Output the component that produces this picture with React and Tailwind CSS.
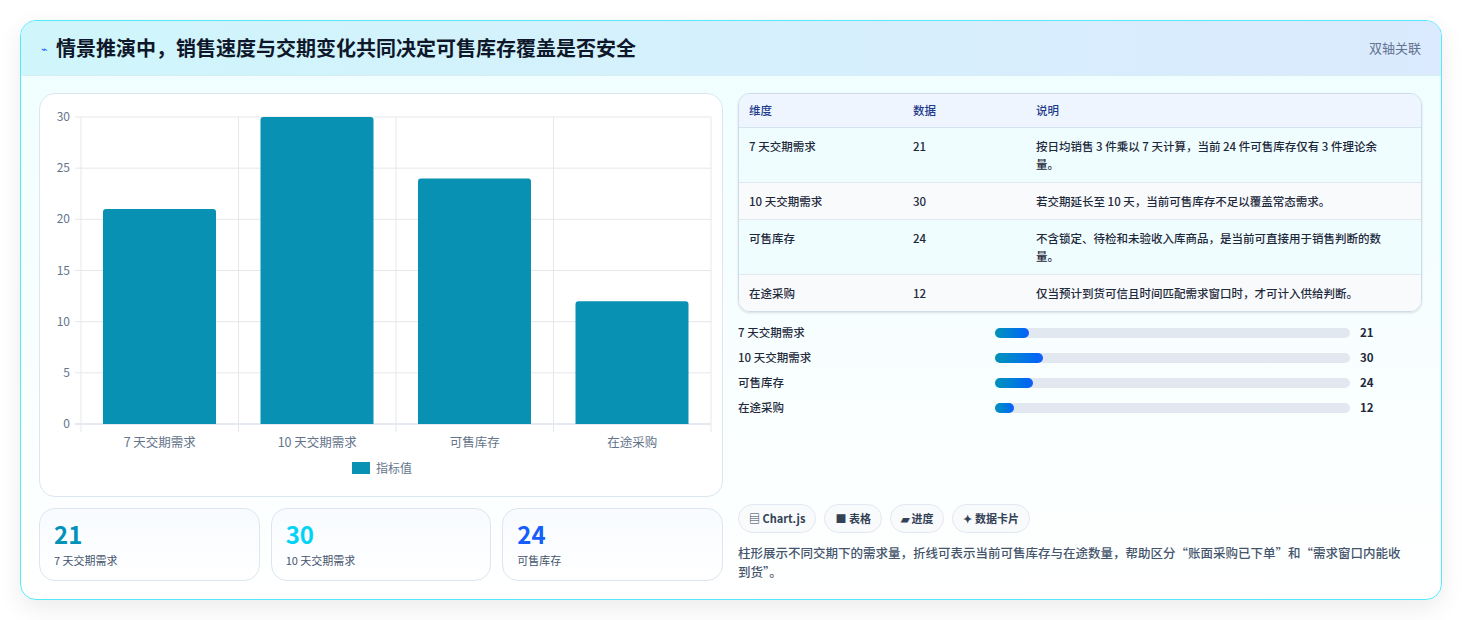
import React from "react";

const F = { fontFamily: '"Noto Sans CJK SC", "Noto Sans", sans-serif' };

function Chart() {
  const vals = [21, 30, 24, 12];
  const labels = ["7 天交期需求", "10 天交期需求", "可售库存", "在途采购"];
  const x0 = 41, x1 = 671, yTop = 23, yBot = 330;
  const sc = (yBot - yTop) / 30;
  const cw = (x1 - x0) / 4;
  return (
    <svg width="684" height="404" style={F}>
      {[0, 5, 10, 15, 20, 25, 30].map((t) => {
        const y = yBot - t * sc;
        return (
          <g key={t}>
            <line x1={x0 - 6} x2={x1} y1={y} y2={y} stroke={t === 0 ? "#cbd5e1" : "#e5e7eb"} />
            <text x={30} y={y + 4} textAnchor="end" fontSize="12" fill="#64748b">{t}</text>
          </g>
        );
      })}
      {[0, 1, 2, 3, 4].map((i) => (
        <line key={i} x1={x0 + i * cw} x2={x0 + i * cw} y1={yTop} y2={yBot + 8} stroke="#e5e7eb" />
      ))}
      {vals.map((v, i) => {
        const bx = x0 + i * cw + 22;
        const h = v * sc;
        return (
          <g key={i}>
            <path d={`M${bx} ${yBot} V${yBot - h + 3} Q${bx} ${yBot - h} ${bx + 3} ${yBot - h} H${bx + 110} Q${bx + 113} ${yBot - h} ${bx + 113} ${yBot - h + 3} V${yBot}Z`} fill="#0891b2" />
            <text x={x0 + i * cw + cw / 2} y={yBot + 23} textAnchor="middle" fontSize="12.5" fill="#64748b">{labels[i]}</text>
          </g>
        );
      })}
      <rect x="312" y="368" width="18" height="12" fill="#0891b2" />
      <text x="336" y="379" fontSize="12" fill="#64748b">指标值</text>
    </svg>
  );
}

const rows = [
  ["7 天交期需求", "21", "按日均销售 3 件乘以 7 天计算，当前 24 件可售库存仅有 3 件理论余量。"],
  ["10 天交期需求", "30", "若交期延长至 10 天，当前可售库存不足以覆盖常态需求。"],
  ["可售库存", "24", "不含锁定、待检和未验收入库商品，是当前可直接用于销售判断的数量。"],
  ["在途采购", "12", "仅当预计到货可信且时间匹配需求窗口时，才可计入供给判断。"],
];
const bars = [["7 天交期需求", 21, 34], ["10 天交期需求", 30, 48], ["可售库存", 24, 38], ["在途采购", 12, 19]];

export default function App() {
  return (
    <div className="bg-white p-5 pr-5" style={F}>
      <div className="w-[1422px] rounded-2xl border border-cyan-300 overflow-hidden shadow-[0_8px_24px_rgba(0,0,0,0.08)] bg-gradient-to-b from-[#effeff] to-white">
        <div className="h-[55px] flex items-center justify-between px-5 bg-gradient-to-r from-[#cff6fb] to-[#dbeafe] border-b border-[#d6eef5]">
          <div className="flex items-center gap-2">
            <span className="text-[11px] text-blue-600">⌁</span>
            <span className="text-[20px] font-bold text-[#0f172a]">情景推演中，销售速度与交期变化共同决定可售库存覆盖是否安全</span>
          </div>
          <span className="text-[13px] text-slate-500">双轴关联</span>
        </div>
        <div className="flex gap-[15px] px-[18px] pt-[17px] pb-[18px]">
          <div className="w-[684px] flex flex-col gap-[11px]">
            <div className="h-[404px] rounded-2xl border border-[#dbe6f0] bg-white"><Chart /></div>
            <div className="grid grid-cols-3 gap-[11px]">
              {[["21", "text-cyan-600", "7 天交期需求"], ["30", "text-cyan-400", "10 天交期需求"], ["24", "text-blue-600", "可售库存"]].map(([n, c, l]) => (
                <div key={l} className="h-[73px] rounded-2xl border border-[#dbe6f0] bg-gradient-to-b from-[#f8fbff] to-white px-[14px] pt-[10px]">
                  <div className={`text-[24px] font-bold leading-[30px] ${c}`}>{n}</div>
                  <div className="text-[11px] text-slate-600 mt-[3px]">{l}</div>
                </div>
              ))}
            </div>
          </div>
          <div className="w-[684px] flex flex-col">
            <div className="rounded-xl border border-[#cfdbe8] overflow-hidden text-[11.5px] text-[#1e293b] shadow-sm">
              <div className="grid grid-cols-[164px_123px_1fr] h-[34px] items-center px-[10px] bg-[#eef5ff] text-[#1e3a8a] font-medium border-b border-[#d5e2ef]">
                <span>维度</span><span>数据</span><span>说明</span>
              </div>
              {rows.map((r, i) => (
                <div key={i} className={`grid grid-cols-[164px_123px_1fr] px-[10px] py-[9px] leading-[18px] font-medium ${i % 2 ? "bg-[#f8fafc]" : "bg-[#f0fdff]"} ${i < 3 ? "border-b border-[#e2e8f0]" : ""}`}>
                  <span>{r[0]}</span><span>{r[1]}</span><span className="pr-6">{r[2]}</span>
                </div>
              ))}
            </div>
            <div className="mt-[12px] flex flex-col gap-[7px]">
              {bars.map(([l, v, w]) => (
                <div key={l} className="flex items-center h-[18px] text-[11.5px] font-medium text-[#1e293b]">
                  <span className="w-[257px]">{l}</span>
                  <div className="w-[355px] h-[10px] rounded-full bg-[#e2e8f0]">
                    <div className="h-full rounded-full bg-gradient-to-r from-cyan-600 to-blue-600" style={{ width: w }} />
                  </div>
                  <span className="ml-[10px] font-bold">{v}</span>
                </div>
              ))}
            </div>
            <div className="mt-auto flex gap-2">
              {["▤ Chart.js", "■ 表格", "▰ 进度", "✦ 数据卡片"].map((t) => (
                <span key={t} className="h-[29px] px-[10px] flex items-center rounded-full border border-[#e2e8f0] bg-[#f8fafc] text-[11px] font-semibold text-[#334155]">{t}</span>
              ))}
            </div>
            <p className="mt-[10px] text-[12.5px] leading-[19px] font-medium text-slate-600 pr-4">柱形展示不同交期下的需求量，折线可表示当前可售库存与在途数量，帮助区分“账面采购已下单”和“需求窗口内能收到货”。</p>
          </div>
        </div>
      </div>
    </div>
  );
}
